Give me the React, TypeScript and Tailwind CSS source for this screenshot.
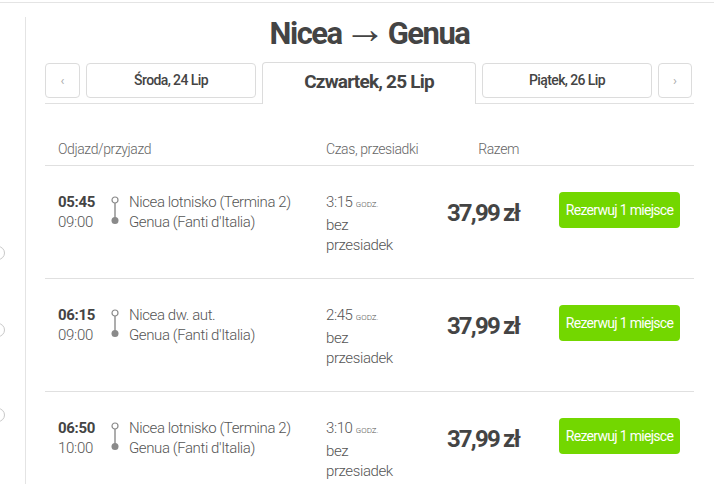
import React from "react";

const rows = [
  { dep: "05:45", arr: "09:00", from: "Nicea lotnisko (Termina 2)", to: "Genua (Fanti d'Italia)", dur: "3:15" },
  { dep: "06:15", arr: "09:00", from: "Nicea dw. aut.", to: "Genua (Fanti d'Italia)", dur: "2:45" },
  { dep: "06:50", arr: "10:00", from: "Nicea lotnisko (Termina 2)", to: "Genua (Fanti d'Italia)", dur: "3:10" },
];

function RouteIcon() {
  return (
    <svg width="10" height="30" viewBox="0 0 10 30" className="mt-[4px]">
      <circle cx="5" cy="4" r="3" fill="white" stroke="#8a8a8a" strokeWidth="1.2" />
      <line x1="5" y1="7" x2="5" y2="22" stroke="#8a8a8a" strokeWidth="1.4" />
      <circle cx="5" cy="24.5" r="3.5" fill="#8a8a8a" />
    </svg>
  );
}

export default function App() {
  return (
    <div className="w-[714px] h-[484px] overflow-hidden bg-white font-['Roboto',sans-serif] text-[#444]">
      <div className="h-[2px]" />
      <div className="border-t border-[#e4e4e4] flex h-full">
        {/* sidebar strip */}
        <div className="w-[26px] shrink-0 mt-[14px] border-r border-[#e4e4e4] flex flex-col">
          <div className="w-[14px] h-[14px] shrink-0 rounded-full border border-[#c8c8c8] -ml-[9px] mt-[229px]" />
          <div className="w-[14px] h-[14px] shrink-0 rounded-full border border-[#c8c8c8] -ml-[9px] mt-[63px]" />
          <div className="w-[14px] h-[14px] shrink-0 rounded-full border border-[#c8c8c8] -ml-[9px] mt-[71px]" />
        </div>

        <div className="ml-[19px] w-[649px] flex flex-col">
          <h1 className="shrink-0 flex items-center justify-center font-bold text-[31px] h-[38px] tracking-[-1.5px] mt-[12px] text-[#444]">
            <span>Nicea</span>
            <span className="font-light text-[42px] leading-none mx-[2px] -translate-y-[5px] tracking-normal">→</span>
            <span>Genua</span>
          </h1>

          {/* date tabs */}
          <div className="shrink-0 flex items-end gap-[6px] mt-[9px] border-b border-[#e0e0e0]">
            <div className="w-[35px] h-[35px] mb-[5px] rounded-[4px] border border-[#dcdcdc] flex items-center justify-center text-[#aaa] text-[13px]">
              ‹
            </div>
            <div className="w-[170px] h-[35px] mb-[5px] rounded-[4px] border border-[#dcdcdc] flex items-center justify-center text-[14px] font-medium tracking-[-0.6px] text-[#444]">
              Środa, 24 Lip
            </div>
            <div className="w-[214px] h-[42px] -mb-px rounded-t-[4px] border border-b-0 border-[#dcdcdc] bg-white flex items-center justify-center text-[19px] font-bold tracking-[-0.8px] text-[#444] pb-[2px]">
              Czwartek, 25 Lip
            </div>
            <div className="w-[170px] h-[35px] mb-[5px] rounded-[4px] border border-[#dcdcdc] flex items-center justify-center text-[14px] font-medium tracking-[-0.6px] text-[#444]">
              Piątek, 26 Lip
            </div>
            <div className="w-[34px] h-[35px] mb-[5px] rounded-[4px] border border-[#dcdcdc] flex items-center justify-center text-[#aaa] text-[13px]">
              ›
            </div>
          </div>

          {/* table header */}
          <div className="shrink-0 flex items-center h-[36px] pt-[3px] mt-[26px] border-b border-[#e0e0e0] text-[14px] font-light text-[#666] tracking-[-0.4px]">
            <div className="w-[281px] pl-[13px]">Odjazd/przyjazd</div>
            <div className="w-[110px]">Czas, przesiadki</div>
            <div className="w-[83px] text-right">Razem</div>
          </div>

          {rows.map((r) => (
            <div key={r.dep} className="shrink-0 flex h-[113px] border-b border-[#e0e0e0] pt-[26px] text-[15px] leading-[20px] font-light text-[#555]">
              <div className="w-[65px] pl-[13px] flex flex-col tracking-[-0.3px]">
                <span className="font-bold text-[#444]">{r.dep}</span>
                <span>{r.arr}</span>
              </div>
              <div className="w-[19px]">
                <RouteIcon />
              </div>
              <div className="w-[197px] flex flex-col tracking-[-0.4px]">
                <span>{r.from}</span>
                <span>{r.to}</span>
              </div>
              <div className="w-[110px] flex flex-col tracking-[-0.4px]">
                <span>
                  {r.dur} <span className="text-[8px] uppercase tracking-[0px]">godz.</span>
                </span>
                <span>bez</span>
                <span>przesiadek</span>
              </div>
              <div className="w-[83px] text-right pt-[11px] text-[24px] font-bold text-[#444] tracking-[-1.8px]">
                37,99 zł
              </div>
              <div className="flex-1 flex justify-end pr-[14px]">
                <button className="h-[36px] w-[121px] rounded-[4px] bg-[#73d700] text-white text-[14px] font-normal tracking-[-0.7px]">
                  Rezerwuj 1 miejsce
                </button>
              </div>
            </div>
          ))}
        </div>
      </div>
    </div>
  );
}
